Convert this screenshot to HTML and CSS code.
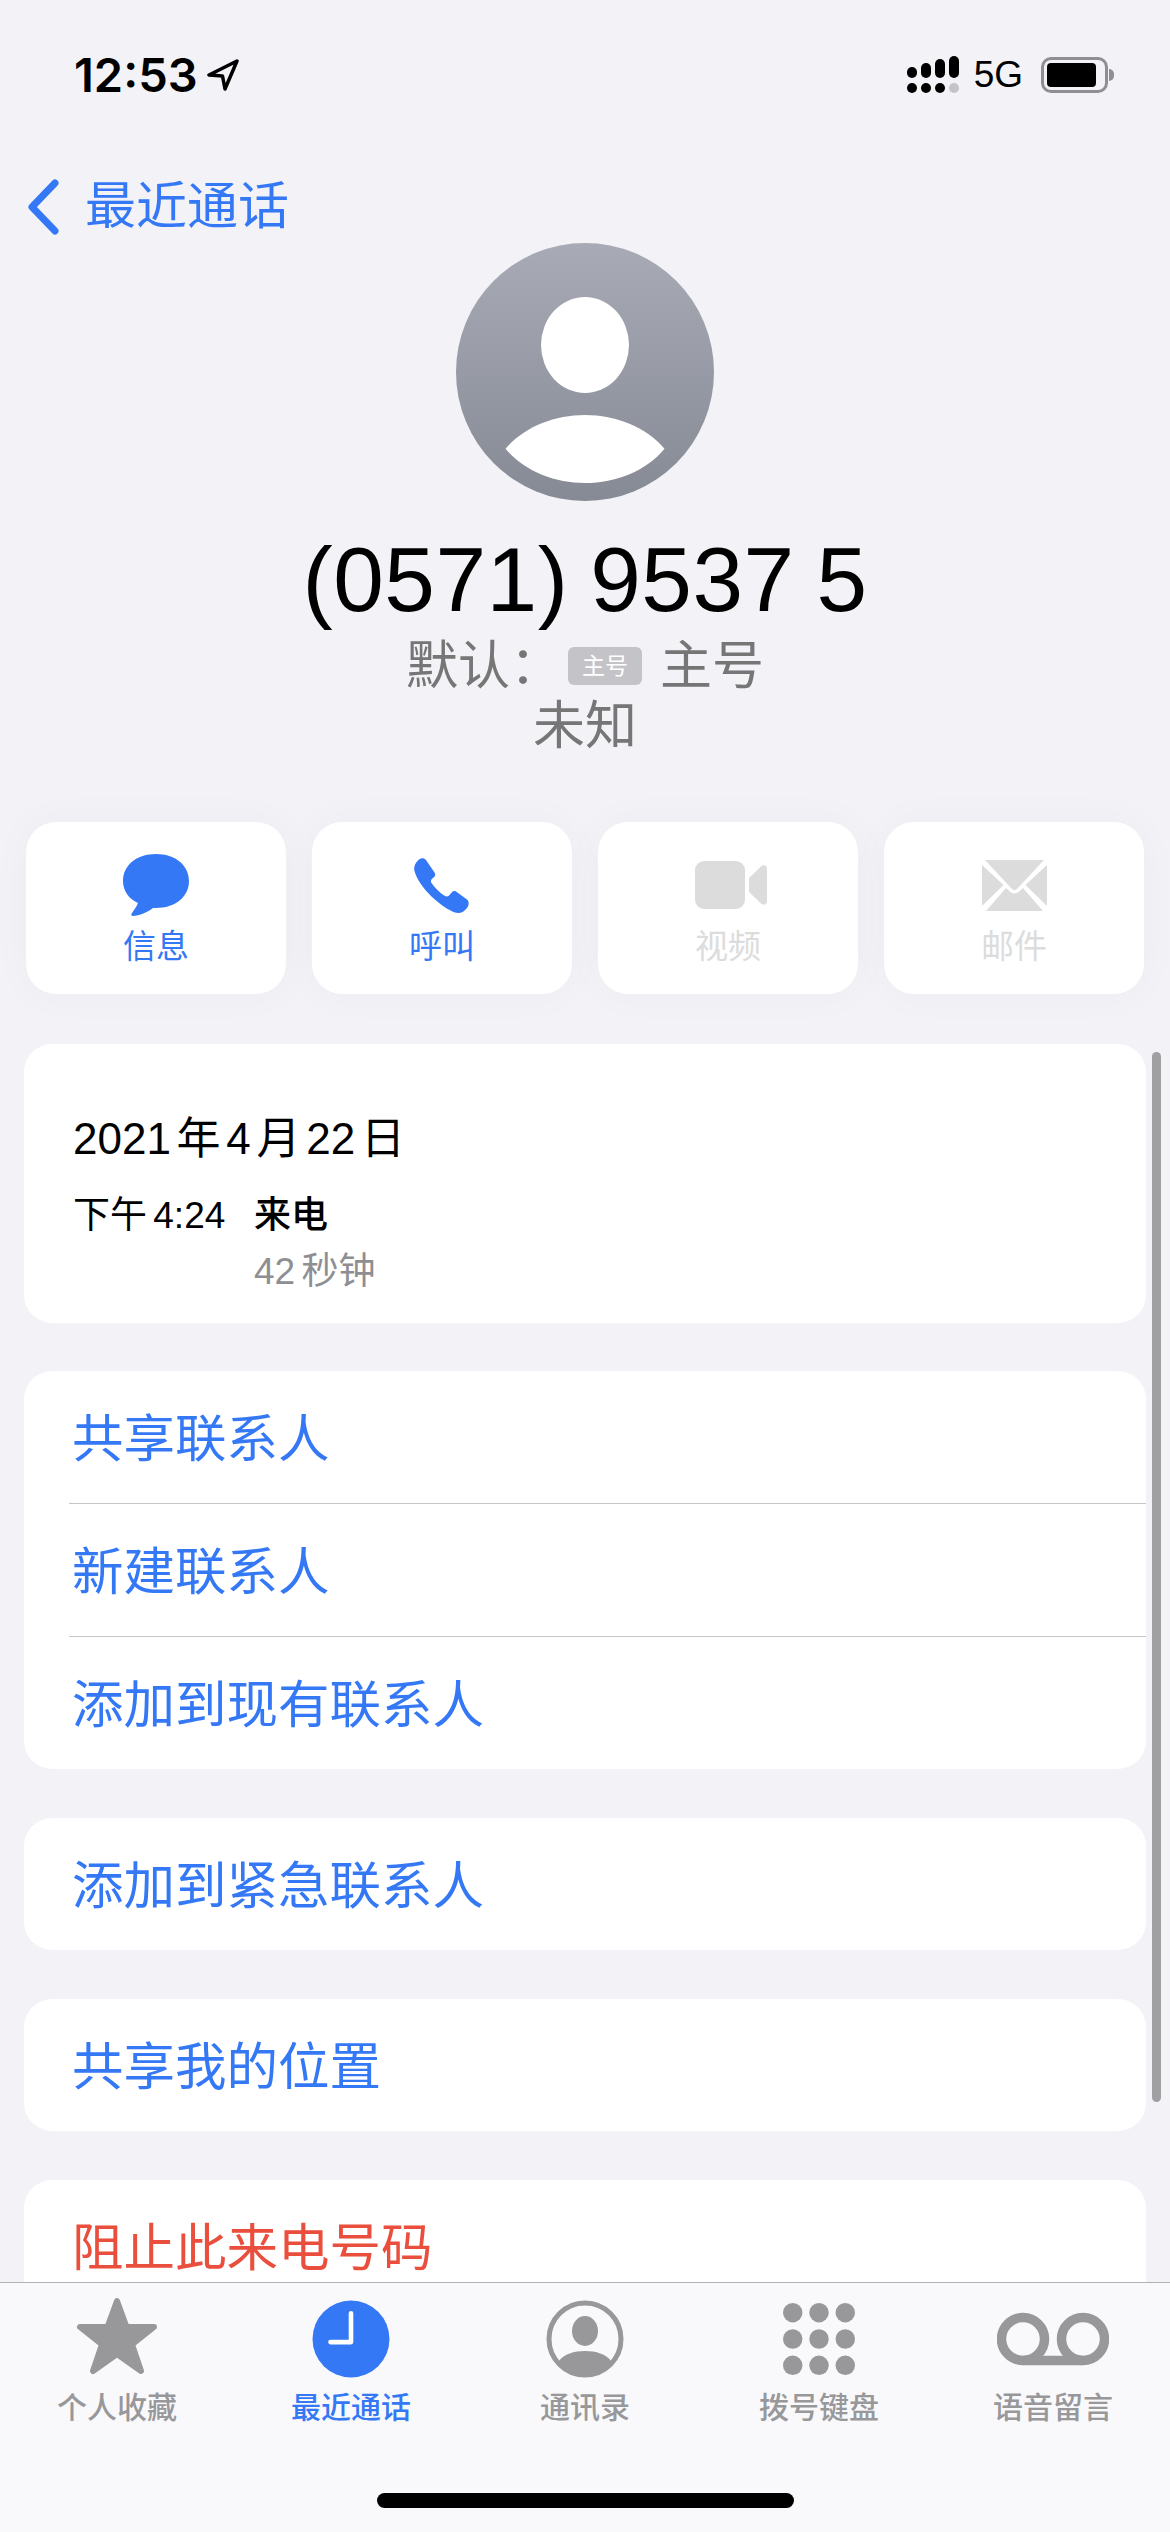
FILE: index.html
```html
<!DOCTYPE html>
<html lang="zh-CN">
  <head>
    <meta charset="UTF-8" />
    <meta name="viewport" content="width=device-width, initial-scale=1.0" />
    <title>最近通话</title>
    <link rel="stylesheet" href="styles.css">
  </head>
  <body>
    <div class="phone">
      <div class="status-bar">
        <div class="status-left">
          <span class="time">12:53</span>
          <svg class="location" viewBox="0 0 32 32">
            <path d="M30 2 L2 16 L15.5 17 L18 30 Z" fill="none" stroke="#000" stroke-width="3.5" stroke-linejoin="round" />
          </svg>
        </div>
        <div class="status-right">
          <div class="signal">
            <div class="signal-col"><i class="bar b1"></i><i class="dot"></i></div>
            <div class="signal-col"><i class="bar b2"></i><i class="dot"></i></div>
            <div class="signal-col"><i class="bar b3"></i><i class="dot"></i></div>
            <div class="signal-col"><i class="bar b4"></i><i class="dot off"></i></div>
          </div>
          <span class="network">5G</span>
          <div class="battery"><div class="battery-level"></div></div>
          <div class="battery-nub"></div>
        </div>
      </div>

      <div class="nav">
        <svg class="chevron" viewBox="0 0 33 56">
          <path d="M28 4 L5 28 L28 52" fill="none" stroke="#3478f6" stroke-width="7" stroke-linecap="round" stroke-linejoin="round" />
        </svg>
        <span>最近通话</span>
      </div>

      <div class="contact">
        <svg class="avatar" viewBox="0 0 258 258">
          <defs>
            <linearGradient id="avatarFill" x1="0" y1="0" x2="0" y2="1">
              <stop offset="0" stop-color="#a8abb6" />
              <stop offset="1" stop-color="#868a94" />
            </linearGradient>
          </defs>
          <circle cx="129" cy="129" r="129" fill="url(#avatarFill)" />
          <ellipse cx="129" cy="102" rx="44" ry="48" fill="#fff" />
          <path d="M49.5 205.700 C68 184 98 172 129 172 C160 172 190 184 208.500 205.700 C190 228 160 240 129 240 C98 240 68 228 49.5 205.700 Z" fill="#fff" />
        </svg>
        <div class="number">(0571) 9537 5</div>
        <div class="label-line">
          <span class="label-key">默认：</span>
          <span class="tag">主号</span>
          <span>主号</span>
        </div>
        <div class="label-line second">未知</div>
      </div>

      <div class="actions">
        <div class="action">
          <svg class="icon-message" viewBox="0 0 66 62">
            <path d="M33 0 C52 0 66 11 66 27 C66 43 52 54 33 54 L30 54 C25 58 16 62 10 62 C8 62 8 60 9 59 C11 56 14 52 15 49 C6 45 0 37 0 27 C0 11 14 0 33 0 Z" fill="#3478f6" />
          </svg>
          <span>信息</span>
        </div>
        <div class="action">
          <svg class="icon-call" viewBox="0 0 55 55">
            <path d="M4 2.5 C6 0 10 -.5 12 2 L20.5 14.5 C22 17 21 18.5 19 20 C17 21.5 16.5 23 17.5 25 C21 30 26 35 31 38 C33 39 34.5 38.5 36 36.5 C37.5 34.5 39.5 32 42 33.5 L53 41.5 C55.5 43.5 55 47 53 50 C50 54 46 56 41 54.5 C28 50 5 30 .5 13 C-.5 9 1 5.5 4 2.5 Z" fill="#3478f6" />
          </svg>
          <span>呼叫</span>
        </div>
        <div class="action disabled">
          <svg class="icon-video" viewBox="0 0 72 48">
            <rect x="0" y="0" width="50" height="48" rx="9" fill="#dcdcdc" />
            <path d="M54 17 L66 5.500 C68 3.500 72 4 72 8 L72 40 C72 44 68 44.500 66 42.500 L54 31 Z" fill="#dcdcdc" />
          </svg>
          <span>视频</span>
        </div>
        <div class="action disabled">
          <svg class="icon-mail" viewBox="0 0 65 51">
            <path d="M3 0 L62 0 L35 29 C33.500 30.500 31.500 30.500 30 29 Z" fill="#dcdcdc" />
            <path d="M0 5 L21.500 25 L0 46 Z" fill="#dcdcdc" />
            <path d="M65 5 L43.500 25 L65 46 Z" fill="#dcdcdc" />
            <path d="M4 51 L24 28 L28.500 32 C31 34 34 34 36.500 32 L41 28 L61 51 Z" fill="#dcdcdc" />
          </svg>
          <span>邮件</span>
        </div>
      </div>

      <div class="card call-info">
        <div class="call-date">2021 年 4 月 22 日</div>
        <div class="call-row">
          <span class="call-time">下午 4:24</span>
          <div>
            <div class="call-type">来电</div>
            <div class="call-length">42 秒钟</div>
          </div>
        </div>
      </div>

      <div class="card">
        <div class="row">共享联系人</div>
        <div class="row">新建联系人</div>
        <div class="row">添加到现有联系人</div>
      </div>
      <div class="card">
        <div class="row">添加到紧急联系人</div>
      </div>
      <div class="card">
        <div class="row">共享我的位置</div>
      </div>
      <div class="card">
        <div class="row danger">阻止此来电号码</div>
      </div>

      <div class="scrollbar"></div>

      <div class="tab-bar">
        <div class="tab">
          <svg class="tab-icon star" viewBox="0 0 82 78">
            <path d="M41 4 L50.500 30 L78 30 L56 47.500 L65 74 L41 57 L17 74 L26 47.500 L4 30 L31.500 30 Z" fill="#98989b" stroke="#98989b" stroke-width="6" stroke-linejoin="round" />
          </svg>
          <span>个人收藏</span>
        </div>
        <div class="tab active">
          <svg class="tab-icon" viewBox="0 0 76 76">
            <circle cx="38" cy="38" r="37.500" fill="#3478f6" />
            <path d="M38 13 L38 41 L18 41" fill="none" stroke="#fff" stroke-width="4.500" stroke-linecap="round" stroke-linejoin="round" />
          </svg>
          <span>最近通话</span>
        </div>
        <div class="tab">
          <svg class="tab-icon" viewBox="0 0 78 78">
            <circle cx="39" cy="39" r="36" fill="none" stroke="#98989b" stroke-width="5" />
            <ellipse cx="39" cy="31" rx="13" ry="15" fill="#98989b" />
            <path d="M13 61 C18 54 28 51 39 51 C50 51 60 54 65 61 C58 70 49 75 39 75 C29 75 20 70 13 61 Z" fill="#98989b" />
          </svg>
          <span>通讯录</span>
        </div>
        <div class="tab">
          <svg class="tab-icon keypad" viewBox="0 0 74 74">
            <g fill="#98989b">
              <circle cx="10" cy="10" r="10" /><circle cx="37" cy="10" r="10" /><circle cx="64" cy="10" r="10" />
              <circle cx="10" cy="37" r="10" /><circle cx="37" cy="37" r="10" /><circle cx="64" cy="37" r="10" />
              <circle cx="10" cy="64" r="10" /><circle cx="37" cy="64" r="10" /><circle cx="64" cy="64" r="10" />
            </g>
          </svg>
          <span>拨号键盘</span>
        </div>
        <div class="tab">
          <svg class="tab-icon" viewBox="0 0 112 78">
            <g fill="none" stroke="#98989b" stroke-width="9.500">
              <circle cx="26" cy="39" r="21.500" />
              <circle cx="86" cy="39" r="21.500" />
              <path d="M26 60.500 L86 60.500" />
            </g>
          </svg>
          <span>语音留言</span>
        </div>
        <div class="home-indicator"></div>
      </div>
    </div>
  </body>
</html>
```

FILE: styles.css
```css
* {
  box-sizing: border-box;
}

body {
  margin: 0;
  background-color: #f2f2f7;
  font-family: "Liberation Sans", "Noto Sans CJK SC", sans-serif;
  color: #000;
}

.phone {
  position: relative;
  width: 1170px;
  height: 2532px;
  overflow: hidden;
  background-color: #f2f2f7;
}

.status-bar {
  display: flex;
  justify-content: space-between;
  align-items: flex-start;
  height: 171px;
  padding: 56px 56px 0 74px;
}

.status-left {
  display: flex;
  align-items: center;
  gap: 9px;
  height: 37px;
}

.time {
  font-family: Inter, "Liberation Sans", sans-serif;
  font-size: 47px;
  font-weight: 600;
  line-height: 37px;
}

.location {
  width: 32px;
  height: 32px;
}

.status-right {
  display: flex;
  align-items: center;
  height: 37px;
}

.signal {
  display: flex;
  align-items: flex-end;
  gap: 4px;
  height: 37px;
  margin-right: 15px;
}

.signal-col {
  display: flex;
  flex-direction: column;
  gap: 5px;
  width: 10px;
}

.bar,
.dot {
  display: block;
  background-color: #000;
  border-radius: 5px;
}

.dot {
  height: 10px;
}

.dot.off {
  background-color: #c4c4c6;
}

.b1 { height: 11px; }
.b2 { height: 15px; }
.b3 { height: 19px; }
.b4 { height: 22px; }

.network {
  font-size: 37px;
  line-height: 37px;
  margin-right: 18px;
}

.battery {
  width: 67px;
  height: 36px;
  padding: 3px 9px 3px 3px;
  border: 3px solid #8e8e93;
  border-radius: 10px;
}

.battery-level {
  height: 100%;
  background-color: #000;
  border-radius: 4px;
}

.battery-nub {
  width: 5px;
  height: 12px;
  margin-left: 1px;
  background-color: #8e8e93;
  border-radius: 0 6px 6px 0;
}

.nav {
  display: flex;
  align-items: center;
  gap: 25px;
  height: 72px;
  padding-left: 27px;
  font-size: 51px;
  line-height: 72px;
  color: #3478f6;
}

.chevron {
  width: 33px;
  height: 56px;
}

.contact {
  display: flex;
  flex-direction: column;
  align-items: center;
}

.avatar {
  display: block;
  width: 258px;
  height: 258px;
}

.number {
  margin-top: 29px;
  font-size: 91px;
  letter-spacing: 0.5px;
  line-height: 100px;
  word-spacing: -4px;
}

.label-line {
  display: flex;
  align-items: center;
  margin-top: 11px;
  font-size: 52px;
  line-height: 50px;
  color: #767676;
}

.label-line.second {
  margin-top: 10px;
}

.label-key {
  width: 162px;
}

.tag {
  width: 74px;
  height: 38px;
  margin-right: 18px;
  background-color: #c4c4c8;
  border-radius: 6px;
  font-size: 23px;
  line-height: 38px;
  text-align: center;
  color: #fff;
}

.actions {
  display: flex;
  gap: 26px;
  margin: 71px 26px 0;
}

.action {
  display: flex;
  flex-direction: column;
  align-items: center;
  flex: 1;
  height: 172px;
  background-color: #fff;
  border-radius: 30px;
  box-shadow: 0 0 44px rgba(0, 0, 0, 0.03);
  font-size: 33px;
  line-height: 40px;
  color: #3478f6;
}

.action.disabled {
  color: #dcdcdc;
}

.icon-message {
  width: 66px;
  height: 62px;
  margin: 32px 0 11px;
}

.icon-call {
  width: 55px;
  height: 55px;
  margin: 36px 2px 14px 0;
}

.icon-video {
  width: 72px;
  height: 48px;
  margin: 39px 0 18px 5px;
}

.icon-mail {
  width: 65px;
  height: 51px;
  margin: 38px 0 16px;
}

.card {
  margin: 49px 24px 0;
  background-color: #fff;
  border-radius: 28px;
}

.call-info {
  height: 279px;
  margin-top: 50px;
  padding: 70px 49px 0;
}

.call-date {
  font-size: 44px;
  line-height: 50px;
  word-spacing: -6.5px;
}

.call-row {
  display: flex;
  margin-top: 27px;
  font-size: 37px;
  line-height: 50px;
  word-spacing: -4px;
}

.call-time {
  width: 181px;
}

.call-type {
  font-weight: 500;
}

.call-length {
  margin-top: 6px;
  color: #8e8e93;
}

.call-info + .card {
  margin-top: 48px;
}

.row {
  height: 132px;
  margin-left: 48px;
  font-size: 51.5px;
  line-height: 136px;
  color: #3478f6;
}

.row + .row {
  height: 133px;
  border-top: 1px solid #c6c6c8;
  margin-left: 45px;
  padding-left: 3px;
}

.row.danger {
  color: #ea4f3d;
}

.scrollbar {
  position: absolute;
  top: 1052px;
  left: 1152px;
  width: 9px;
  height: 1050px;
  background-color: #a0a0a2;
  border-radius: 5px;
}

.tab-bar {
  position: absolute;
  left: 0;
  bottom: 0;
  display: flex;
  width: 1170px;
  height: 250px;
  background-color: #f9f9fb;
  border-top: 1px solid #b2b2b2;
}

.tab {
  display: flex;
  flex-direction: column;
  align-items: center;
  flex: 1;
  font-size: 30px;
  font-weight: 500;
  line-height: 40px;
  color: #98989b;
}

.tab.active {
  color: #3478f6;
}

.tab-icon {
  display: block;
  height: 78px;
  margin-top: 17px;
  margin-bottom: 10px;
}

.tab-icon.star {
  margin-top: 14px;
  margin-bottom: 13px;
}

.tab-icon.keypad {
  height: 72px;
  margin-top: 20px;
  margin-bottom: 13px;
}

.home-indicator {
  position: absolute;
  left: 377px;
  bottom: 24px;
  width: 417px;
  height: 15px;
  background-color: #000;
  border-radius: 8px;
}
```
